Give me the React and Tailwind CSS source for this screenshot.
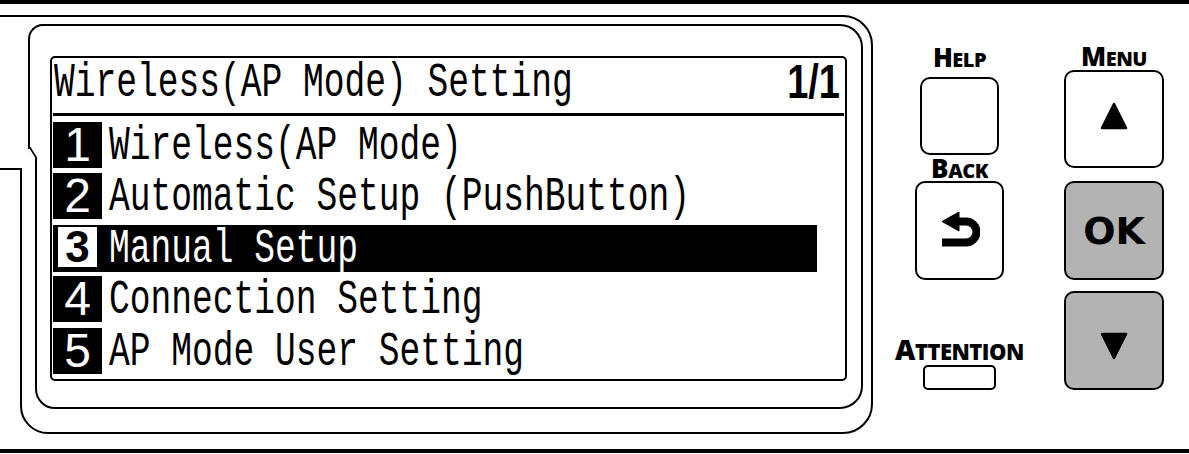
import React from "react";

const items = [
  "Wireless(AP Mode)",
  "Automatic Setup (PushButton)",
  "Manual Setup",
  "Connection Setting",
  "AP Mode User Setting",
];

function LcdText({ children, className = "" }) {
  return (
    <span
      className={
        "inline-block whitespace-pre font-['Liberation_Mono',monospace] text-[34.6px] leading-[46px] scale-y-[1.4] " +
        className
      }
    >
      {children}
    </span>
  );
}

function Row({ n, label, selected }) {
  if (selected) {
    return (
      <div className="h-[51.5px] flex">
        <div className="ml-[1px] w-[764px] h-[47px] bg-black flex items-start">
          <div className="ml-[5px] mt-[2px] w-[39px] h-[40px] bg-white flex items-center justify-center font-['Liberation_Sans',sans-serif] font-bold text-[44px] leading-none text-black">
            {n}
          </div>
          <LcdText className="ml-[12px] text-white translate-y-[1px]">{label}</LcdText>
        </div>
      </div>
    );
  }
  return (
    <div className="h-[51.5px] flex items-start">
      <div className="ml-[1px] w-[49px] h-[46px] bg-black flex items-center justify-center font-['Liberation_Sans',sans-serif] text-[48px] leading-none text-white">
        {n}
      </div>
      <LcdText className="ml-[7px] text-black translate-y-[1px]">{label}</LcdText>
    </div>
  );
}

function Lcd() {
  return (
    <div className="ml-[13px] mt-[30px] w-[797px] h-[325px] border-2 border-black rounded-[5px] flex flex-col">
      <div className="h-[55px] flex items-center justify-between pl-[2px] pr-[5px]">
        <LcdText className="-translate-y-[2px]">Wireless(AP Mode) Setting</LcdText>
        <span className="inline-block font-['Liberation_Sans',sans-serif] font-bold text-[38px] leading-none scale-y-[1.25] -translate-y-[3px]">
          1/1
        </span>
      </div>
      <div className="h-[3px] bg-black mx-[1px]" />
      <div className="pt-[6px] flex flex-col">
        {items.map((label, i) => (
          <Row key={label} n={i + 1} label={label} selected={i === 2} />
        ))}
      </div>
    </div>
  );
}

function Bezel() {
  return (
    <div className="relative w-[873px] shrink-0 pt-[11px]">
      <div className="ml-[20px] w-[853px] h-[419px] border-2 border-black rounded-tr-[30px] rounded-br-[30px] rounded-bl-[28px]">
        <div className="relative ml-[13px] mt-[7px] w-[828px] h-[385px] border-2 border-black rounded-tl-[8px] rounded-tr-[23px] rounded-br-[23px] rounded-bl-[20px]">
          {/* upper-left offset of the middle frame line */}
          <div className="absolute -left-[9px] -top-[2px] w-[18px] h-[125px] bg-white border-t-2 border-l-2 border-black rounded-tl-[15px]" />
          <div className="absolute -left-[5.5px] top-[121px] w-[10px] h-[11px] bg-white border-l-2 border-black skew-x-[32deg]" />
          <Lcd />
        </div>
      </div>
      {/* step on the left edge of the outer frame */}
      <div className="absolute left-0 top-[11px] w-[22px] h-[155px] bg-white border-t-2 border-b-2 border-black" />
    </div>
  );
}

function KeyLabel({ first, rest, big = 26, small = 20, className = "" }) {
  return (
    <div
      className={
        "h-[26px] leading-[26px] whitespace-nowrap font-['Open_Sans',sans-serif] font-extrabold tracking-[-0.5px] text-black " +
        className
      }
    >
      <span style={{ fontSize: big }}>{first}</span>
      <span style={{ fontSize: small }}>{rest}</span>
    </div>
  );
}

function BackIcon() {
  return (
    <svg width="38" height="35" viewBox="0 0 38 35" className="ml-[3px] -mt-[3px]">
      <path d="M14 9.5 H24 A10.5 10.5 0 0 1 24 30.5 H0" fill="none" stroke="black" strokeWidth="8" />
      <polygon points="0,9.5 17,0 17,19" fill="black" stroke="black" strokeWidth="1" strokeLinejoin="round" />
    </svg>
  );
}

function Triangle({ down }) {
  return (
    <svg width="28" height="28" viewBox="0 0 28 28">
      <polygon
        points={down ? "2,2 26,2 14,26" : "14,2 26,26 2,26"}
        fill="black"
        stroke="black"
        strokeWidth="2.5"
        strokeLinejoin="round"
      />
    </svg>
  );
}

function Keys() {
  return (
    <div className="flex flex-1">
      <div className="ml-[22px] w-[129px] flex flex-col items-center">
        <KeyLabel first="H" rest="ELP" className="mt-[40px]" />
        <div className="mt-[7px] w-[79px] h-[78px] border-2 border-black rounded-[10px] bg-white" />
        <KeyLabel first="B" rest="ACK" />
        <div className="w-[89px] h-[99px] border-2 border-black rounded-[10px] bg-white flex items-center justify-center">
          <BackIcon />
        </div>
        <KeyLabel first="A" rest="TTENTION" big={28} small={22} className="mt-[55px] h-[28px] leading-[28px]" />
        <div className="mt-[2px] w-[73px] h-[25px] border-2 border-black rounded-[5px] bg-white" />
      </div>
      <div className="ml-[40px] w-[100px] flex flex-col items-center">
        <KeyLabel first="M" rest="ENU" className="mt-[39px]" />
        <div className="mt-[1px] w-[100px] h-[98px] border-2 border-black rounded-[10px] bg-white flex items-center justify-center">
          <div className="-mt-[7px]">
            <Triangle />
          </div>
        </div>
        <div className="mt-[13px] w-[100px] h-[99px] border-2 border-black rounded-[10px] bg-[#b3b3b3] flex items-center justify-center font-['DejaVu_Sans',sans-serif] font-bold text-[38px] leading-none text-black">
          OK
        </div>
        <div className="mt-[11px] w-[100px] h-[99px] border-2 border-black rounded-[10px] bg-[#b3b3b3] flex items-center justify-center">
          <div className="mt-[10px]">
            <Triangle down />
          </div>
        </div>
      </div>
    </div>
  );
}

export default function App() {
  return (
    <div className="w-[1189px] h-[454px] bg-white flex flex-col overflow-hidden">
      <div className="h-[4px] bg-black shrink-0" />
      <div className="flex h-[445px] shrink-0">
        <Bezel />
        <Keys />
      </div>
      <div className="h-[4px] bg-black shrink-0" />
    </div>
  );
}
